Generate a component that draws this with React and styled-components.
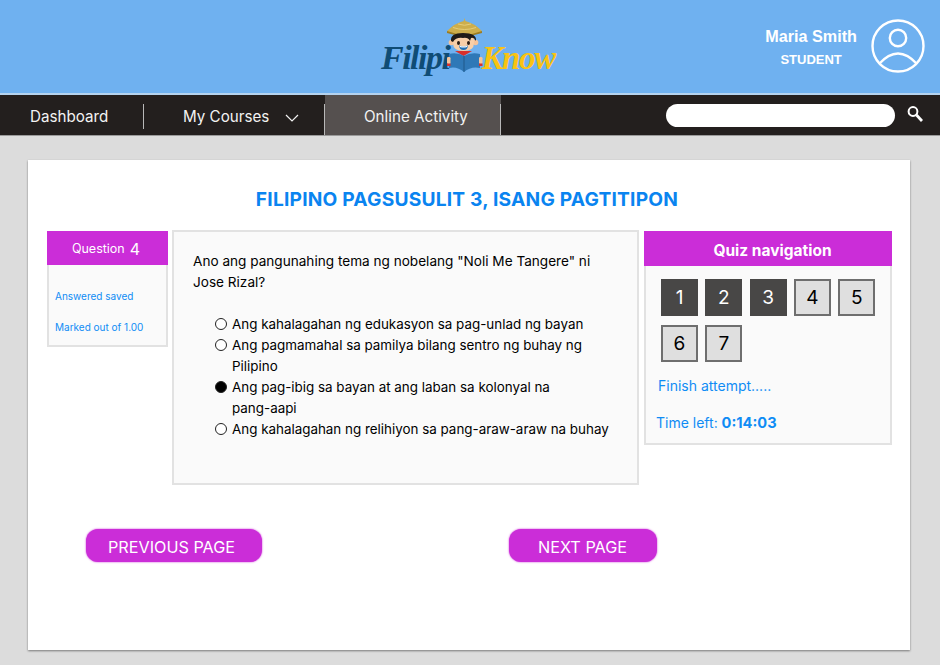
import React from "react";
import styled, { createGlobalStyle } from "styled-components";

const GlobalStyle = createGlobalStyle`
  html, body {
    margin: 0;
    padding: 0;
  }
  body {
    background: #dcdcdc;
    font-family: "Inter", "Liberation Sans", sans-serif;
    color: #000;
  }
  * {
    box-sizing: border-box;
  }
`;

const Page = styled.div`
  width: 940px;
  height: 665px;
  overflow: hidden;
  background: #dcdcdc;
`;

const Header = styled.header`
  height: 95px;
  background: #6fb1f0;
  border-bottom: 2px solid #b5d3ef;
  display: flex;
  align-items: flex-start;
  padding: 18px 15px 0 381px;
`;

const Logo = styled.div`
  width: 175px;
  height: 62px;
  display: flex;
  align-items: flex-end;
  flex-shrink: 0;
`;

const LogoWord = styled.span`
  font-family: "Liberation Serif", serif;
  font-style: italic;
  font-weight: 700;
  font-size: ${(p) => p.$size}px;
  line-height: 40px;
  margin-bottom: 2px;
  letter-spacing: ${(p) => p.$spacing}px;
  color: ${(p) => p.$color};
`;

const BoyIcon = styled.svg`
  width: 36px;
  height: 54px;
  flex-shrink: 0;
  align-self: flex-start;
  margin: 0 -2px;
`;

const User = styled.div`
  margin: 1px 0 0 auto;
  display: flex;
  align-items: center;
  gap: 14px;
`;

const UserText = styled.div`
  padding-top: 1px;
  text-align: center;
  color: #fff;
  font-family: "Liberation Sans", sans-serif;
  font-weight: 700;
`;

const UserName = styled.div`
  font-size: 16.2px;
  line-height: 20px;
`;

const UserRole = styled.div`
  font-size: 13px;
  line-height: 16px;
  margin-top: 6px;
`;

const Avatar = styled.svg`
  width: 54px;
  height: 54px;
  display: block;
`;

const Nav = styled.nav`
  height: 41px;
  background: #231f1e;
  border-bottom: 1px solid #9a9a9a;
  display: flex;
  align-items: stretch;
  color: #f2f2f2;
  font-size: 15.2px;
`;

const NavItem = styled.div`
  position: relative;
  width: ${(p) => p.$width}px;
  padding: 3px 0 0 ${(p) => p.$pad}px;
  display: flex;
  align-items: center;
  gap: 16px;
  background: ${(p) => (p.$active ? "#55504f" : "transparent")};

  &::after {
    content: "";
    position: absolute;
    right: 0;
    top: ${(p) => p.$ruleTop}px;
    bottom: ${(p) => p.$ruleBottom}px;
    width: 1px;
    background: #b8b8b8;
  }
`;

const Chevron = styled.svg`
  width: 14px;
  height: 8px;
  margin-top: 3px;
`;

const SearchArea = styled.div`
  margin-left: auto;
  display: flex;
  align-items: center;
  gap: 12px;
  padding-right: 17px;
`;

const SearchBox = styled.div`
  width: 229px;
  height: 23px;
  border-radius: 12px;
  background: #fff;
`;

const SearchGlyph = styled.svg`
  width: 16px;
  height: 18px;
  margin-top: -3px;
`;

const Main = styled.main`
  padding: 24px 30px 0 28px;
`;

const Card = styled.section`
  height: 490px;
  background: #fff;
  box-shadow: 0 1px 2px rgba(0, 0, 0, 0.45);
  padding: 0 18px 0 19px;
`;

const Title = styled.h1`
  margin: 0;
  padding: 26px 5px 0 0;
  height: 70px;
  text-align: center;
  font-size: 19.2px;
  line-height: 26px;
  font-weight: 700;
  letter-spacing: 0.2px;
  color: #0a84f0;
`;

const Columns = styled.div`
  display: flex;
  align-items: flex-start;
`;

const Panel = styled.div`
  flex-shrink: 0;
  background: #fafafa;
  border: 2px solid #e2e2e2;
`;

const SidePanel = styled(Panel)`
  width: 121px;
  height: 116px;
  margin-top: 1px;
`;

const PanelHead = styled.div`
  height: ${(p) => p.$height || 34}px;
  margin: -2px -2px 0;
  padding: ${(p) => p.$padTop || 1}px ${(p) => p.$padRight || 0}px 0 ${(p) => p.$padLeft || 0}px;
  background: #cb2dd8;
  color: #fff;
  display: flex;
  align-items: center;
  justify-content: center;
  gap: 5px;
  font-size: ${(p) => p.$size || 12.5}px;
  font-weight: ${(p) => p.$weight || 400};
`;

const QuestionNumber = styled.span`
  font-size: 16px;
`;

const SideNotes = styled.div`
  padding: 24px 0 0 6px;
  display: flex;
  flex-direction: column;
  gap: 17px;
`;

const SideNote = styled.div`
  color: #0f8cf5;
  font-size: 10px;
  line-height: 14px;
`;

const QuestionPanel = styled(Panel)`
  width: 467px;
  height: 255px;
  margin: 0 5px 0 4px;
  padding: 19px 19px 0 19px;
`;

const QuestionText = styled.p`
  margin: 0 0 21px;
  width: 415px;
  font-size: 13.6px;
  line-height: 21px;
`;

const OptionList = styled.ul`
  list-style: none;
  margin: 0;
  padding: 0 0 0 22px;
`;

const Option = styled.li`
  display: flex;
  font-size: 13.4px;
  line-height: 21px;
`;

const OptionLine = styled.div`
  white-space: nowrap;
`;

const Radio = styled.span`
  width: 12px;
  height: 12px;
  margin: 4px 5px 0 0;
  flex-shrink: 0;
  border-radius: 50%;
  border: 1px solid #222;
  background: ${(p) => (p.$checked ? "#000" : "#fff")};
`;

const NavPanel = styled(Panel)`
  width: 248px;
  height: 214px;
  margin-top: 1px;
`;

const AttemptGrid = styled.div`
  display: flex;
  flex-wrap: wrap;
  gap: 9px 7.3px;
  padding: 13px 0 0 15px;
`;

const AttemptButton = styled.div`
  width: 37px;
  height: 37px;
  display: flex;
  align-items: center;
  justify-content: center;
  font-size: 19px;
  background: ${(p) => (p.$done ? "#484746" : "#dfdfdf")};
  color: ${(p) => (p.$done ? "#fff" : "#000")};
  border: 2px solid ${(p) => (p.$done ? "#484746" : "#6e6e6e")};
`;

const FinishLink = styled.div`
  color: #0f8cf5;
  font-size: 14px;
  line-height: 18px;
  margin: 15px 0 0 12px;
`;

const TimeLeft = styled.div`
  color: #0f8cf5;
  font-size: 14px;
  line-height: 20px;
  margin: 18px 0 0 10px;

  strong {
    font-size: 14.6px;
    font-weight: 700;
  }
`;

const Pager = styled.div`
  display: flex;
  margin-top: 44px;
  padding-left: 39px;
`;

const PageButton = styled.button`
  width: ${(p) => p.$width}px;
  height: 33px;
  margin-right: ${(p) => p.$gap || 0}px;
  border: none;
  border-radius: 12px;
  padding: 2px ${(p) => p.$padRight}px 0 0;
  background: #cb2dd8;
  box-shadow: 0 0 2px #cb2dd8;
  color: #fff;
  font-family: inherit;
  font-size: 16.2px;
  cursor: pointer;
`;

function Boy() {
  return (
    <BoyIcon viewBox="0 0 36 54">
      {/* hat */}
      <path d="M17.5 0 L18.3 3 Q27 5 35 13 Q33 16 17.5 17 Q2 16 0 13 Q8 5 16.7 3 Z" fill="#cdae4c" />
      <path d="M0 13 Q17.5 20 35 13 L35 15 Q17.5 21 0 15 Z" fill="#9c7c22" />
      <path d="M6 9.5 Q17.5 13.5 29 9.5 M11 6 Q17.5 8.5 24 6" fill="none" stroke="#e6cd78" strokeWidth="1" />
      {/* face */}
      <circle cx="4.5" cy="24.5" r="2.8" fill="#f6c49a" />
      <circle cx="28.5" cy="24.5" r="2.8" fill="#f6c49a" />
      <path d="M6 18 H27 V25 Q27 33 16.5 33 Q6 33 6 25 Z" fill="#f8cfa8" />
      <path d="M4 23 Q3 15 16 15 Q30 15 29 23 Q27 19 24 20 L23 23 Q21 19 16 20 Q9 19 6 24 Z" fill="#1f1a18" />
      <ellipse cx="11.5" cy="25" rx="1.5" ry="1.9" fill="#2a1c14" />
      <ellipse cx="21.5" cy="25" rx="1.5" ry="1.9" fill="#2a1c14" />
      <path d="M12 27.5 Q16.5 29 21 27.5 Q20.5 32 16.5 32 Q12.5 32 12 27.5 Z" fill="#1f6fb5" />
      <path d="M12.5 27.7 Q16.5 28.8 20.5 27.7 L20 29 Q16.5 30 13 29 Z" fill="#fff" />
      {/* scarf */}
      <path d="M8 33 H25 L16.5 38 Z" fill="#d7302c" />
      {/* book and hands */}
      <path d="M2 36 Q10 34 17 38 Q24 34 33 36 V50 Q24 48 17 54 Q10 48 2 50 Z" fill="#2f78b7" />
      <path d="M17 38 V54" stroke="#1c527f" strokeWidth="0.8" />
      <rect x="0" y="39" width="3.5" height="7" rx="1.2" fill="#f6c49a" />
      <rect x="32" y="39" width="3.5" height="7" rx="1.2" fill="#f6c49a" />
      <rect x="0" y="45.5" width="3.5" height="2.5" fill="#d7302c" />
      <rect x="32" y="45.5" width="3.5" height="2.5" fill="#d7302c" />
    </BoyIcon>
  );
}

const options = [
  { lines: ["Ang kahalagahan ng edukasyon sa pag-unlad ng bayan"] },
  { lines: ["Ang pagmamahal sa pamilya bilang sentro ng buhay ng", "Pilipino"] },
  { lines: ["Ang pag-ibig sa bayan at ang laban sa kolonyal na", "pang-aapi"], checked: true },
  { lines: ["Ang kahalagahan ng relihiyon sa pang-araw-araw na buhay"] },
];

const attempts = [1, 2, 3, 4, 5, 6, 7];

export default function App() {
  return (
    <Page>
      <GlobalStyle />
      <Header>
        <Logo>
          <LogoWord $color="#0f4c75" $size={34} $spacing={-1.5}>Filipi</LogoWord>
          <Boy />
          <LogoWord $color="#f9c312" $size={33} $spacing={-1.4}>Know</LogoWord>
        </Logo>
        <User>
          <UserText>
            <UserName>Maria Smith</UserName>
            <UserRole>STUDENT</UserRole>
          </UserText>
          <Avatar viewBox="0 0 54 54">
            <circle cx="27" cy="27" r="25.5" fill="none" stroke="#fff" strokeWidth="2.4" />
            <circle cx="27" cy="19" r="8.2" fill="none" stroke="#fff" strokeWidth="2.4" />
            <path d="M8 45 Q27 24 46 45" fill="none" stroke="#fff" strokeWidth="2.4" />
          </Avatar>
        </User>
      </Header>
      <Nav>
        <NavItem $width={144} $pad={30} $ruleTop={9} $ruleBottom={6}>Dashboard</NavItem>
        <NavItem $width={181} $pad={39} $ruleTop={9} $ruleBottom={0}>
          My Courses
          <Chevron viewBox="0 0 14 8">
            <path d="M1 1 L7 7 L13 1" fill="none" stroke="#f2f2f2" strokeWidth="1.2" />
          </Chevron>
        </NavItem>
        <NavItem $width={176} $pad={39} $ruleTop={9} $ruleBottom={0} $active>Online Activity</NavItem>
        <SearchArea>
          <SearchBox />
          <SearchGlyph viewBox="0 0 16 18">
            <circle cx="6" cy="6.5" r="4.4" fill="none" stroke="#fff" strokeWidth="2" />
            <path d="M9.5 10 L15 16" stroke="#fff" strokeWidth="2.8" />
          </SearchGlyph>
        </SearchArea>
      </Nav>
      <Main>
        <Card>
          <Title>FILIPINO PAGSUSULIT 3, ISANG PAGTITIPON</Title>
          <Columns>
            <SidePanel>
              <PanelHead $padRight={3}>
                Question <QuestionNumber>4</QuestionNumber>
              </PanelHead>
              <SideNotes>
                <SideNote>Answered saved</SideNote>
                <SideNote>Marked out of 1.00</SideNote>
              </SideNotes>
            </SidePanel>
            <QuestionPanel>
              <QuestionText>
                Ano ang pangunahing tema ng nobelang "Noli Me Tangere" ni Jose Rizal?
              </QuestionText>
              <OptionList>
                {options.map((o) => (
                  <Option key={o.lines[0]}>
                    <Radio $checked={o.checked} />
                    <div>
                      {o.lines.map((line) => (
                        <OptionLine key={line}>{line}</OptionLine>
                      ))}
                    </div>
                  </Option>
                ))}
              </OptionList>
            </QuestionPanel>
            <NavPanel>
              <PanelHead $height={35} $size={15.5} $weight={700} $padTop={4} $padLeft={9}>
                Quiz navigation
              </PanelHead>
              <AttemptGrid>
                {attempts.map((n) => (
                  <AttemptButton key={n} $done={n < 4}>{n}</AttemptButton>
                ))}
              </AttemptGrid>
              <FinishLink>Finish attempt.....</FinishLink>
              <TimeLeft>
                Time left: <strong>0:14:03</strong>
              </TimeLeft>
            </NavPanel>
          </Columns>
          <Pager>
            <PageButton $width={176} $gap={247} $padRight={5}>PREVIOUS PAGE</PageButton>
            <PageButton $width={148} $padRight={1}>NEXT PAGE</PageButton>
          </Pager>
        </Card>
      </Main>
    </Page>
  );
}
